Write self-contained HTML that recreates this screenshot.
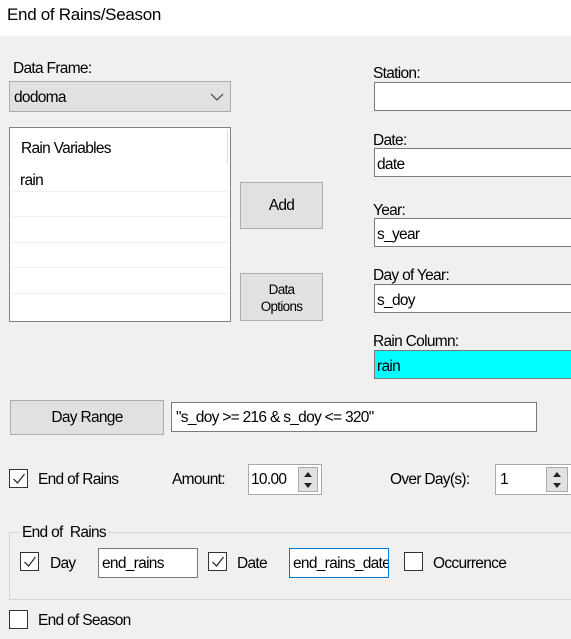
<!DOCTYPE html>
<html><head><style>
*{box-sizing:border-box;margin:0;padding:0}
body{width:571px;height:639px;background:#f0f0f0;font-family:"Liberation Sans",sans-serif;font-size:15.5px;color:#000;position:relative;overflow:hidden;letter-spacing:-0.7px}
.a{position:absolute}
.tb{background:#fff;border:1px solid #7a7a7a}
.btn{background:#e1e1e1;border:1px solid #adadad;text-align:center}
.cb{background:#fff;border:1px solid #333;width:19px;height:19px}
.cb svg{position:absolute;left:2px;top:2px}
.t{white-space:nowrap}
</style></head><body>
<div class="a" style="left:0;top:0;width:571px;height:36px;background:#fff"></div>
<div class="a t" style="left:7px;top:5px;font-size:17px;letter-spacing:-0.3px">End of Rains/Season</div>

<div class="a t" style="left:13px;top:60px">Data Frame:</div>
<div class="a" style="left:9px;top:81px;width:222px;height:31px;background:#e1e1e1;border:1px solid #adadad"></div>
<div class="a t" style="left:14px;top:89px">dodoma</div>
<svg class="a" style="left:210px;top:93px" width="14" height="8"><path d="M1 1 L7 7 L13 1" fill="none" stroke="#555" stroke-width="1.3"/></svg>

<div class="a tb" style="left:9px;top:127px;width:222px;height:195px;border-color:#828282"></div>
<div class="a" style="left:227px;top:130px;width:1px;height:34px;background:#ddd"></div>
<div class="a t" style="left:21px;top:140px">Rain Variables</div>
<div class="a t" style="left:20px;top:172px">rain</div>
<div class="a" style="left:12px;top:191px;width:216px;height:1px;background:#f0f0f0"></div>
<div class="a" style="left:12px;top:216px;width:216px;height:1px;background:#f0f0f0"></div>
<div class="a" style="left:12px;top:242px;width:216px;height:1px;background:#f0f0f0"></div>
<div class="a" style="left:12px;top:267px;width:216px;height:1px;background:#f0f0f0"></div>
<div class="a" style="left:12px;top:293px;width:216px;height:1px;background:#f0f0f0"></div>

<div class="a btn" style="left:240px;top:182px;width:83px;height:47px;line-height:45px">Add</div>
<div class="a btn" style="left:240px;top:273px;width:83px;height:48px;font-size:13.5px;line-height:17px;padding-top:7px">Data<br>Options</div>

<div class="a t" style="left:373px;top:65px">Station:</div>
<div class="a tb" style="left:374px;top:82px;width:200px;height:29px"></div>
<div class="a t" style="left:373px;top:132px">Date:</div>
<div class="a tb" style="left:374px;top:148px;width:200px;height:29px"></div>
<div class="a t" style="left:377px;top:156px">date</div>
<div class="a t" style="left:373px;top:202px">Year:</div>
<div class="a tb" style="left:374px;top:218px;width:200px;height:29px"></div>
<div class="a t" style="left:377px;top:226px">s_year</div>
<div class="a t" style="left:373px;top:267px">Day of Year:</div>
<div class="a tb" style="left:374px;top:284px;width:200px;height:29px"></div>
<div class="a t" style="left:377px;top:292px">s_doy</div>
<div class="a t" style="left:373px;top:333px">Rain Column:</div>
<div class="a tb" style="left:374px;top:350px;width:200px;height:29px;background:#00ffff"></div>
<div class="a t" style="left:377px;top:358px">rain</div>

<div class="a btn" style="left:10px;top:400px;width:154px;height:35px;line-height:34px">Day Range</div>
<div class="a tb" style="left:171px;top:402px;width:366px;height:30px"></div>
<div class="a t" style="left:176px;top:409px">"s_doy &gt;= 216 &amp; s_doy &lt;= 320"</div>

<div class="a cb" style="left:9px;top:469px"><svg width="14" height="14"><path d="M1.5 7 L5.5 11 L12.5 2" fill="none" stroke="#333" stroke-width="1.3"/></svg></div>
<div class="a t" style="left:38px;top:471px">End of Rains</div>
<div class="a t" style="left:172px;top:471px">Amount:</div>
<div class="a tb" style="left:248px;top:464px;width:74px;height:31px;border-color:#aaa"></div>
<div class="a t" style="left:251px;top:471px">10.00</div>
<div class="a" style="left:298px;top:467px;width:20px;height:25px;background:#e1e1e1;border:1px solid #aaa"></div>
<svg class="a" style="left:302px;top:470px" width="12" height="20"><path d="M2 7 L6 2 L10 7Z M2 13 L6 18 L10 13Z" fill="#222"/></svg>
<div class="a t" style="left:390px;top:471px">Over Day(s):</div>
<div class="a tb" style="left:495px;top:464px;width:80px;height:31px;border-color:#aaa"></div>
<div class="a t" style="left:500px;top:471px">1</div>
<div class="a" style="left:546px;top:467px;width:22px;height:25px;background:#e1e1e1;border:1px solid #aaa"></div>
<svg class="a" style="left:551px;top:470px" width="12" height="20"><path d="M2 7 L6 2 L10 7Z M2 13 L6 18 L10 13Z" fill="#222"/></svg>

<div class="a" style="left:9px;top:532px;width:570px;height:68px;border:1px solid #d5d5d5"></div>
<div class="a t" style="left:20px;top:524px;background:#f0f0f0;padding:0 2px">End of&nbsp; Rains</div>
<div class="a cb" style="left:20px;top:552px"><svg width="14" height="14"><path d="M1.5 7 L5.5 11 L12.5 2" fill="none" stroke="#333" stroke-width="1.3"/></svg></div>
<div class="a t" style="left:50px;top:555px">Day</div>
<div class="a tb" style="left:98px;top:548px;width:100px;height:30px"></div>
<div class="a t" style="left:102px;top:555px">end_rains</div>
<div class="a cb" style="left:208px;top:552px"><svg width="14" height="14"><path d="M1.5 7 L5.5 11 L12.5 2" fill="none" stroke="#333" stroke-width="1.3"/></svg></div>
<div class="a t" style="left:237px;top:555px">Date</div>
<div class="a tb" style="left:289px;top:548px;width:100px;height:30px;border-color:#0078d7;overflow:hidden"><span class="a t" style="left:3px;top:6px">end_rains_date</span></div>
<div class="a cb" style="left:404px;top:552px"></div>
<div class="a t" style="left:433px;top:555px">Occurrence</div>

<div class="a cb" style="left:9px;top:610px"></div>
<div class="a t" style="left:38px;top:612px">End of Season</div>
</body></html>
